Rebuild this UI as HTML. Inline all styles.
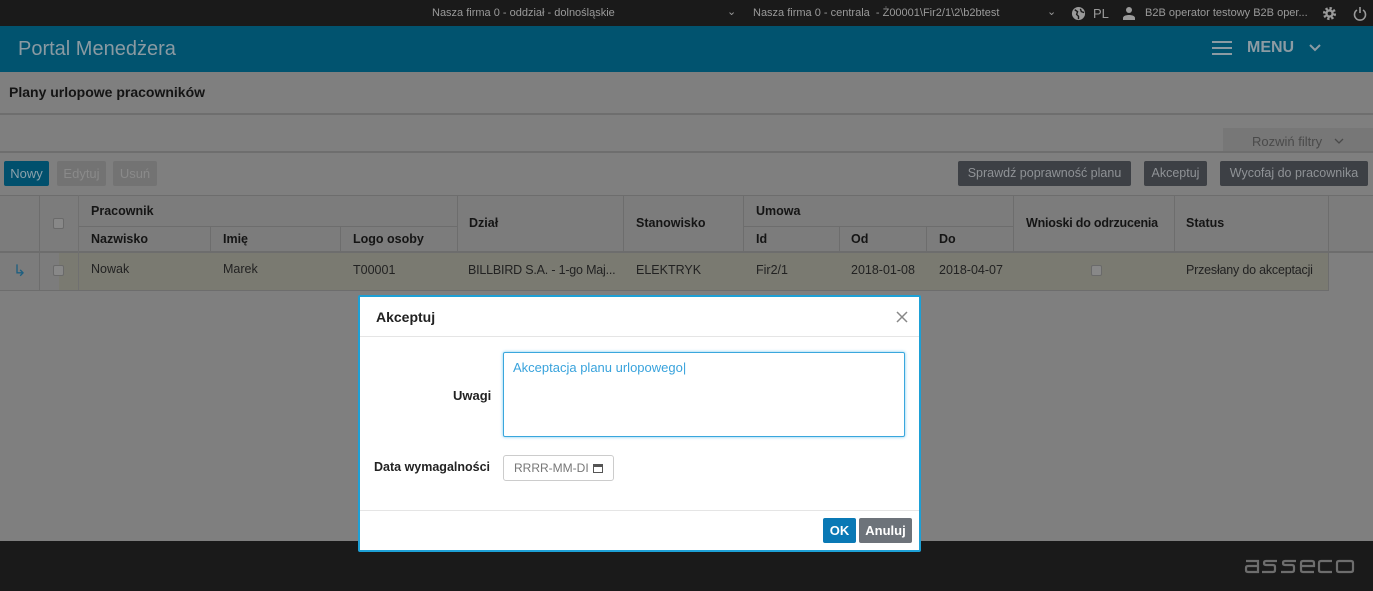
<!DOCTYPE html>
<html><head><meta charset="utf-8"><style>
*{box-sizing:border-box;margin:0;padding:0}
body{width:1373px;height:591px;overflow:hidden;background:#7f7f7f;font-family:"Liberation Sans",sans-serif;position:relative;font-size:13px}
.a{position:absolute;white-space:nowrap}
.top{left:0;top:0;width:1373px;height:26px;background:#1a1a1a;color:#9a9a9a;font-size:11px}
.hdr{left:0;top:26px;width:1373px;height:46px;background:#01536f}
.btn{position:absolute;height:25px;line-height:25px;border-radius:2px;font-size:13px;text-align:center}
.dk{background:#3d4045;color:#8f9296;font-size:12.5px}
.th{font-weight:bold;color:#151515;font-size:12.5px}
.vl{position:absolute;width:1px;background:#6d6d6d}
.hl{position:absolute;height:1px;background:#6d6d6d}
.cb{position:absolute;width:11px;height:11px;border:1px solid #6a6a6a;border-radius:2px;background:#888}
.td{color:#222;font-size:12.5px}
</style></head><body>
<div class="a top">
<span class="a" style="left:432px;top:7px">Nasza firma 0 - oddział - dolnośląskie</span>
<span class="a" style="left:727px;top:5px;font-size:11px">&#8964;</span>
<span class="a" style="left:753px;top:7px">Nasza firma 0 - centrala &nbsp;- Ż00001\Fir2/1\2\b2btest</span>
<span class="a" style="left:1047px;top:5px">&#8964;</span>
<svg class="a" style="left:1071px;top:6px" width="15" height="15" viewBox="0 0 16 16"><circle cx="8" cy="8" r="7" fill="#9a9a9a"/><path d="M4 4l3 2-1 3 2 2v3M10 3l1 3 3 1" stroke="#1a1a1a" stroke-width="1.5" fill="none"/></svg>
<span class="a" style="left:1093px;top:6px;font-size:13px">PL</span>
<svg class="a" style="left:1122px;top:6px" width="14" height="14" viewBox="0 0 14 14"><circle cx="7" cy="4" r="3" fill="#9a9a9a"/><path d="M1 14v-2c0-2 3-3 6-3s6 1 6 3v2z" fill="#9a9a9a"/></svg>
<span class="a" style="left:1145px;top:7px">B2B operator testowy B2B oper...</span>
<svg class="a" style="left:1322px;top:6px" width="15" height="15" viewBox="0 0 16 16"><circle cx="8" cy="8" r="5" fill="none" stroke="#9a9a9a" stroke-width="4" stroke-dasharray="2.2 1.7"/><circle cx="8" cy="8" r="4.5" fill="#9a9a9a"/><circle cx="8" cy="8" r="2" fill="#1a1a1a"/></svg>
<svg class="a" style="left:1353px;top:6px" width="14" height="15" viewBox="0 0 14 15"><path d="M4 4a5.5 5.5 0 1 0 6 0M7 1v6" stroke="#9a9a9a" stroke-width="1.6" fill="none"/></svg>
</div>
<div class="a hdr">
<span class="a" style="left:18px;top:12px;font-size:20px;color:#8a9aa2">Portal Menedżera</span>
<svg class="a" style="left:1212px;top:15px" width="20" height="14"><path d="M0 1h20M0 7h20M0 13h20" stroke="#8c9ba3" stroke-width="2"/></svg>
<span class="a" style="left:1247px;top:13px;font-size:16px;font-weight:bold;color:#8c9ba3">MENU</span>
<svg class="a" style="left:1309px;top:18px" width="12" height="8"><path d="M1 1l5 5 5-5" stroke="#8c9ba3" stroke-width="2" fill="none"/></svg>
</div>
<span class="a" style="left:9px;top:84px;font-weight:bold;font-size:14px;color:#141414">Plany urlopowe pracowników</span>
<div class="hl" style="left:0;top:113px;width:1373px;background:#6e6e6e;height:2px"></div>
<div class="a" style="left:1223px;top:128px;width:150px;height:24px;background:#777"></div>
<span class="a" style="left:1252px;top:134px;color:#4a4a4a">Rozwiń filtry</span>
<svg class="a" style="left:1334px;top:138px" width="10" height="6"><path d="M1 1l4 4 4-4" stroke="#4a4a4a" stroke-width="1.3" fill="none"/></svg>
<div class="hl" style="left:0;top:151px;width:1373px;height:2px;background:#6e6e6e"></div>
<div class="btn" style="left:4px;top:161px;width:45px;background:#01506d;color:#8ba0aa">Nowy</div>
<div class="btn" style="left:57px;top:161px;width:49px;background:#737373;color:#8a8a8a">Edytuj</div>
<div class="btn" style="left:113px;top:161px;width:44px;background:#737373;color:#8a8a8a">Usuń</div>
<div class="btn dk" style="left:958px;top:161px;width:173px">Sprawdź poprawność planu</div>
<div class="btn dk" style="left:1144px;top:161px;width:63px">Akceptuj</div>
<div class="btn dk" style="left:1220px;top:161px;width:148px">Wycofaj do pracownika</div>
<div class="a" style="left:0;top:195px;width:1373px;height:57px;background:#7c7c7c"></div>
<div class="a" style="left:0;top:253px;width:1329px;height:37px;background:#7a7a71"></div>
<div class="a" style="left:0;top:253px;width:59px;height:37px;background:#7c7c7c"></div>
<div class="hl" style="left:0;top:195px;width:1373px"></div>
<div class="hl" style="left:78px;top:226px;width:379px"></div>
<div class="hl" style="left:743px;top:226px;width:270px"></div>
<div class="hl" style="left:0;top:251px;width:1373px;height:2px"></div>
<div class="hl" style="left:0;top:290px;width:1329px"></div>
<div class="vl" style="left:39px;top:195px;height:95px"></div>
<div class="vl" style="left:78px;top:195px;height:95px;background:#707070"></div>
<div class="vl" style="left:210px;top:226px;height:26px"></div>
<div class="vl" style="left:340px;top:226px;height:26px"></div>
<div class="vl" style="left:457px;top:195px;height:57px"></div>
<div class="vl" style="left:623px;top:195px;height:57px"></div>
<div class="vl" style="left:743px;top:195px;height:57px"></div>
<div class="vl" style="left:839px;top:226px;height:26px"></div>
<div class="vl" style="left:926px;top:226px;height:26px"></div>
<div class="vl" style="left:1013px;top:195px;height:57px"></div>
<div class="vl" style="left:1174px;top:195px;height:57px"></div>
<div class="vl" style="left:1328px;top:195px;height:95px"></div>
<div class="cb" style="left:53px;top:218px"></div>
<span class="a th" style="left:91px;top:204px">Pracownik</span>
<span class="a th" style="left:91px;top:232px">Nazwisko</span>
<span class="a th" style="left:223px;top:232px">Imię</span>
<span class="a th" style="left:353px;top:232px">Logo osoby</span>
<span class="a th" style="left:469px;top:216px">Dział</span>
<span class="a th" style="left:636px;top:216px">Stanowisko</span>
<span class="a th" style="left:756px;top:204px">Umowa</span>
<span class="a th" style="left:756px;top:232px">Id</span>
<span class="a th" style="left:851px;top:232px">Od</span>
<span class="a th" style="left:939px;top:232px">Do</span>
<span class="a th" style="left:1026px;top:216px;letter-spacing:-0.2px">Wnioski do odrzucenia</span>
<span class="a th" style="left:1186px;top:216px">Status</span>
<span class="a" style="left:13px;top:261px;font-size:16px;color:#1d5f80">&#8627;</span>
<div class="cb" style="left:53px;top:265px"></div>
<span class="a td" style="left:91px;top:262px">Nowak</span>
<span class="a td" style="left:223px;top:262px">Marek</span>
<span class="a td" style="left:353px;top:263px">T00001</span>
<span class="a td" style="left:468px;top:263px;letter-spacing:-0.2px">BILLBIRD S.A. - 1-go Maj...</span>
<span class="a td" style="left:636px;top:263px">ELEKTRYK</span>
<span class="a td" style="left:756px;top:263px">Fir2/1</span>
<span class="a td" style="left:851px;top:263px">2018-01-08</span>
<span class="a td" style="left:939px;top:263px">2018-04-07</span>
<div class="cb" style="left:1091px;top:265px"></div>
<span class="a td" style="left:1186px;top:263px;letter-spacing:-0.2px">Przesłany do akceptacji</span>
<div class="a" style="left:0;top:541px;width:1373px;height:50px;background:#1a1a1a"></div>
<svg class="a" style="left:1244px;top:558px" width="112" height="16" viewBox="0 0 112 16" fill="none" stroke="#6d6d6d" stroke-width="2.2">
<path d="M2 3h12v11H4q-2 0-2-2v-2q0-2 2-2h10"/>
<path d="M33 3H22q-2 0-2 2t2 2h7q2 0 2 2v3q0 2-2 2H18"/>
<path d="M52 3H41q-2 0-2 2t2 2h7q2 0 2 2v3q0 2-2 2H37"/>
<path d="M70 14H59q-2 0-2-2V5q0-2 2-2h9q2 0 2 2v3H57"/>
<path d="M88 3H77q-2 0-2 2v7q0 2 2 2h11"/>
<path d="M95 3h12q2 0 2 2v7q0 2-2 2H95q-2 0-2-2V5q0-2 2-2z"/>
</svg>
<div class="a" style="left:358px;top:295px;width:563px;height:257px;background:#fff;border:2px solid #1da0d6;border-radius:2px">
<span class="a" style="left:16px;top:12px;font-weight:bold;font-size:14px;color:#222">Akceptuj</span>
<svg class="a" style="left:536px;top:14px" width="12" height="12"><path d="M1 1l10 10M11 1L1 11" stroke="#888" stroke-width="1.5"/></svg>
<div class="a" style="left:0;top:39px;width:559px;height:1px;background:#e5e5e5"></div>
<span class="a" style="left:93px;top:91px;font-weight:bold;color:#222">Uwagi</span>
<div class="a" style="left:143px;top:55px;width:402px;height:85px;border:1px solid #3aa7dd;border-radius:2px;box-shadow:0 0 3px #7ac8ee">
<span class="a" style="left:9px;top:7px;color:#39a3dc">Akceptacja planu urlopowego|</span></div>
<span class="a" style="left:14px;top:163px;font-weight:bold;color:#222;font-size:12.5px">Data wymagalności</span>
<div class="a" style="left:143px;top:158px;width:111px;height:26px;border:1px solid #ccc;border-radius:3px">
<span class="a" style="left:10px;top:5px;color:#777;font-size:12px">RRRR-MM-DI</span>
<svg class="a" style="left:89px;top:7px" width="10" height="10"><rect x="0.5" y="1.5" width="9" height="8" fill="none" stroke="#555"/><rect x="0" y="1" width="10" height="3" fill="#555"/></svg></div>
<div class="a" style="left:0;top:213px;width:559px;height:1px;background:#e5e5e5"></div>
<div class="btn" style="left:463px;top:221px;width:33px;background:#0a79b5;color:#fff;font-weight:bold">OK</div>
<div class="btn" style="left:499px;top:221px;width:53px;background:#6d737a;color:#fff;font-weight:bold">Anuluj</div>
</div>
</body></html>
